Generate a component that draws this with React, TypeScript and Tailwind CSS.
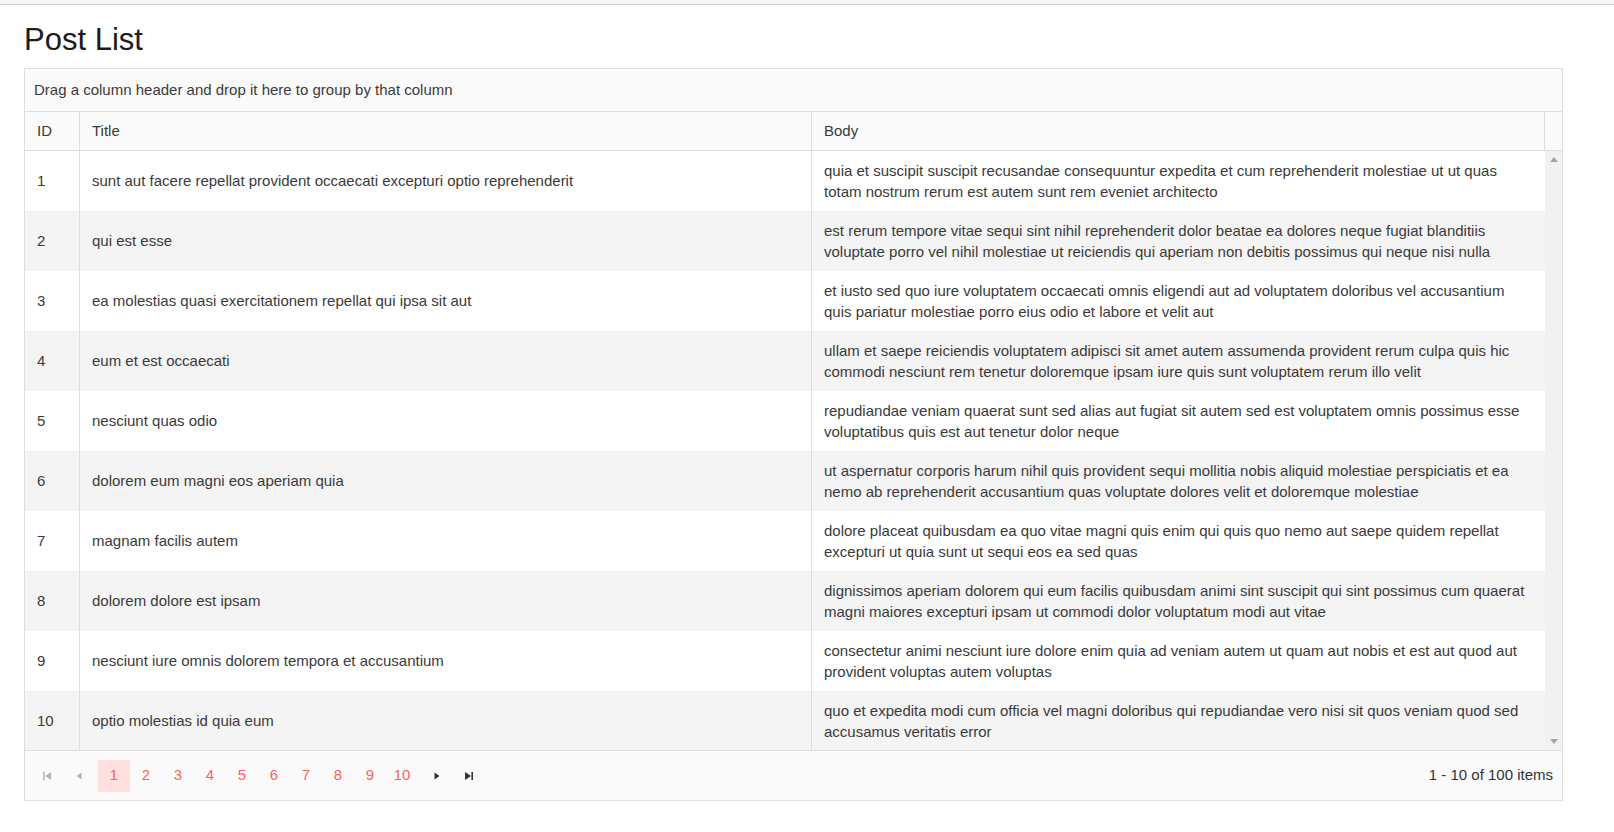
import React from 'react';

type Post = { id: number; title: string; body: [string, string] };

const posts: Post[] = [
  {
    id: 1,
    title: 'sunt aut facere repellat provident occaecati excepturi optio reprehenderit',
    body: [
      'quia et suscipit suscipit recusandae consequuntur expedita et cum reprehenderit molestiae ut ut quas',
      'totam nostrum rerum est autem sunt rem eveniet architecto',
    ],
  },
  {
    id: 2,
    title: 'qui est esse',
    body: [
      'est rerum tempore vitae sequi sint nihil reprehenderit dolor beatae ea dolores neque fugiat blanditiis',
      'voluptate porro vel nihil molestiae ut reiciendis qui aperiam non debitis possimus qui neque nisi nulla',
    ],
  },
  {
    id: 3,
    title: 'ea molestias quasi exercitationem repellat qui ipsa sit aut',
    body: [
      'et iusto sed quo iure voluptatem occaecati omnis eligendi aut ad voluptatem doloribus vel accusantium',
      'quis pariatur molestiae porro eius odio et labore et velit aut',
    ],
  },
  {
    id: 4,
    title: 'eum et est occaecati',
    body: [
      'ullam et saepe reiciendis voluptatem adipisci sit amet autem assumenda provident rerum culpa quis hic',
      'commodi nesciunt rem tenetur doloremque ipsam iure quis sunt voluptatem rerum illo velit',
    ],
  },
  {
    id: 5,
    title: 'nesciunt quas odio',
    body: [
      'repudiandae veniam quaerat sunt sed alias aut fugiat sit autem sed est voluptatem omnis possimus esse',
      'voluptatibus quis est aut tenetur dolor neque',
    ],
  },
  {
    id: 6,
    title: 'dolorem eum magni eos aperiam quia',
    body: [
      'ut aspernatur corporis harum nihil quis provident sequi mollitia nobis aliquid molestiae perspiciatis et ea',
      'nemo ab reprehenderit accusantium quas voluptate dolores velit et doloremque molestiae',
    ],
  },
  {
    id: 7,
    title: 'magnam facilis autem',
    body: [
      'dolore placeat quibusdam ea quo vitae magni quis enim qui quis quo nemo aut saepe quidem repellat',
      'excepturi ut quia sunt ut sequi eos ea sed quas',
    ],
  },
  {
    id: 8,
    title: 'dolorem dolore est ipsam',
    body: [
      'dignissimos aperiam dolorem qui eum facilis quibusdam animi sint suscipit qui sint possimus cum quaerat',
      'magni maiores excepturi ipsam ut commodi dolor voluptatum modi aut vitae',
    ],
  },
  {
    id: 9,
    title: 'nesciunt iure omnis dolorem tempora et accusantium',
    body: [
      'consectetur animi nesciunt iure dolore enim quia ad veniam autem ut quam aut nobis et est aut quod aut',
      'provident voluptas autem voluptas',
    ],
  },
  {
    id: 10,
    title: 'optio molestias id quia eum',
    body: [
      'quo et expedita modi cum officia vel magni doloribus qui repudiandae vero nisi sit quos veniam quod sed',
      'accusamus veritatis error',
    ],
  },
];

const NavIcon = ({ kind, disabled }: { kind: 'first' | 'prev' | 'next' | 'last'; disabled?: boolean }) => {
  const fill = disabled ? '#b4b4b4' : '#333333';
  return (
    <svg width="10" height="10" viewBox="0 0 10 10">
      {kind === 'first' && (
        <>
          <rect x="1" y="1" width="1.6" height="8" fill={fill} />
          <polygon points="9,1 9,9 3,5" fill={fill} />
        </>
      )}
      {kind === 'prev' && <polygon points="7.5,1.5 7.5,8.5 2.5,5" fill={fill} />}
      {kind === 'next' && <polygon points="2.5,1.5 2.5,8.5 7.5,5" fill={fill} />}
      {kind === 'last' && (
        <>
          <polygon points="1,1 1,9 7,5" fill={fill} />
          <rect x="7.4" y="1" width="1.6" height="8" fill={fill} />
        </>
      )}
    </svg>
  );
};

export default function App() {
  return (
    <div className="min-h-screen bg-white text-[15px] text-[#3a3a3a]" style={{ fontFamily: '"Liberation Sans", Arial, sans-serif' }}>
      <div className="h-[5px] bg-[#f5f5f5] border-b border-[#d2d2d2]" />
      <div className="px-6">
        <h1 className="mt-4 mb-[10px] text-[31px] leading-[1.2] text-[#1b1b1b] font-normal">Post List</h1>

        <div className="w-[1539px] border border-[#dedede]">
          <div className="h-[43px] flex items-center px-[9px] bg-[#fafafa] border-b border-[#dedede]">
            Drag a column header and drop it here to group by that column
          </div>

          <div className="flex h-[39px] bg-[#fafafa] border-b border-[#dedede]">
            <div className="w-[55px] shrink-0 flex items-center px-3 border-r border-[#dedede]">ID</div>
            <div className="w-[732px] shrink-0 flex items-center px-3 border-r border-[#dedede]">Title</div>
            <div className="w-[733px] shrink-0 flex items-center px-3 border-r border-[#dedede]">Body</div>
            <div className="flex-1" />
          </div>

          <div className="flex h-[599px]">
            <div className="flex-1 overflow-hidden">
              {posts.map((p, i) => (
                <div key={p.id} className={`flex h-[60px] ${i % 2 === 1 ? 'bg-[#f4f4f4]' : 'bg-white'}`}>
                  <div className="w-[55px] shrink-0 flex items-center px-3 border-r border-[#dedede]">{p.id}</div>
                  <div className="w-[732px] shrink-0 flex items-center px-3 border-r border-[#dedede] whitespace-nowrap">{p.title}</div>
                  <div className="flex-1 flex flex-col justify-center px-3 leading-[21px] whitespace-nowrap">
                    <span>{p.body[0]}</span>
                    <span>{p.body[1]}</span>
                  </div>
                </div>
              ))}
            </div>
            <div className="w-[17px] shrink-0 bg-[#f1f1f1] flex flex-col items-center justify-between py-[6px]">
              <svg width="8" height="5" viewBox="0 0 8 5">
                <polygon points="0,5 8,5 4,0" fill="#a3a3a3" />
              </svg>
              <svg width="8" height="5" viewBox="0 0 8 5">
                <polygon points="0,0 8,0 4,5" fill="#a3a3a3" />
              </svg>
            </div>
          </div>

          <div className="h-[50px] flex items-center bg-[#fafafa] border-t border-[#dedede] pl-[6px] pr-[9px]">
            <div className="w-8 h-8 flex items-center justify-center">
              <NavIcon kind="first" disabled />
            </div>
            <div className="w-8 h-8 flex items-center justify-center">
              <NavIcon kind="prev" disabled />
            </div>
            <div className="flex ml-[3px]">
              {Array.from({ length: 10 }, (_, k) => k + 1).map((n) => (
                <div
                  key={n}
                  className={`w-8 h-8 flex items-center justify-center text-[#ff6358] ${n === 1 ? 'bg-[#ffe0de]' : ''}`}
                >
                  {n}
                </div>
              ))}
            </div>
            <div className="w-8 h-8 ml-[3px] flex items-center justify-center">
              <NavIcon kind="next" />
            </div>
            <div className="w-8 h-8 flex items-center justify-center">
              <NavIcon kind="last" />
            </div>
            <div className="ml-auto text-[#333333]">1 - 10 of 100 items</div>
          </div>
        </div>
      </div>
    </div>
  );
}
